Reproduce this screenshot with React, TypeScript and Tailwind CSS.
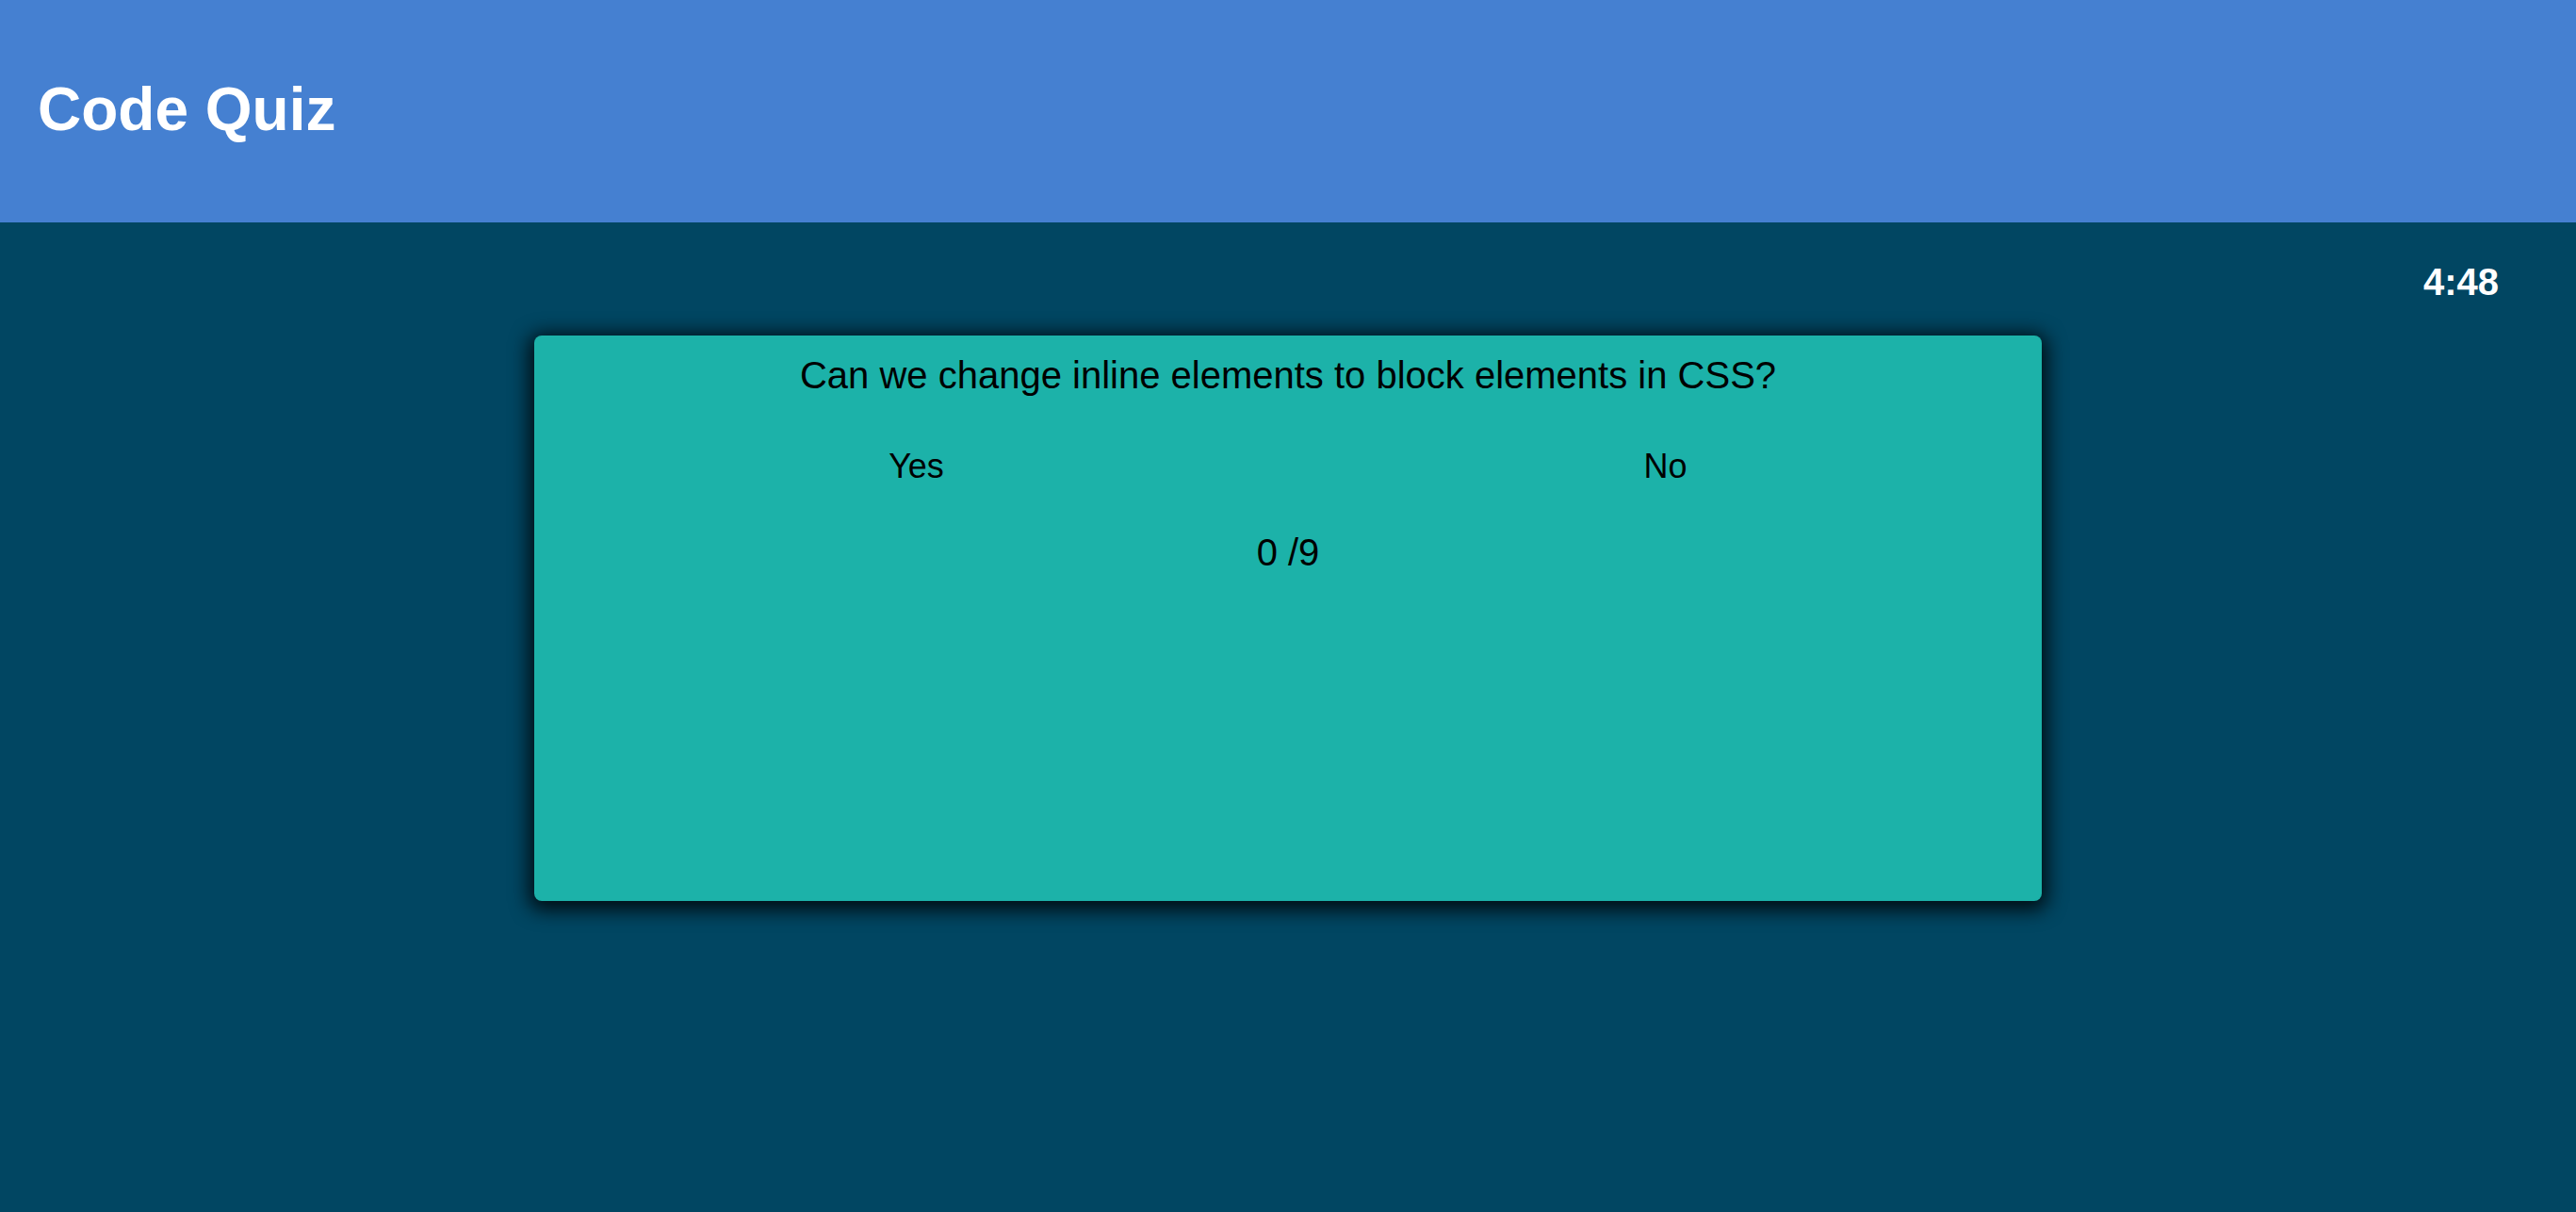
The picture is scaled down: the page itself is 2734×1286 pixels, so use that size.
const question = {
  text: "Can we change inline elements to block elements in CSS?",
  choices: ["Yes", "No"],
};

export default function App() {
  const score = 0;
  const total = 9;

  return (
    <div
      className="min-h-screen bg-[#014662]"
      style={{ fontFamily: '"Liberation Sans", Arial, sans-serif' }}
    >
      <header className="flex h-[236px] items-center bg-[#4580d1] px-[40px] pb-1">
        <h1 className="text-[64px] font-bold leading-none text-white">Code Quiz</h1>
      </header>

      <main className="pt-[43px]">
        <div className="flex justify-end pr-[82px]">
          <span className="text-[40px] font-bold leading-none text-white">4:48</span>
        </div>

        <section className="mx-auto mt-[37px] h-[600px] w-[1600px] rounded-[8px] bg-[#1cb2a9] pt-[22px] text-black shadow-[0_4px_20px_6px_rgba(0,0,0,0.8)]">
          <p className="text-center text-[40px] leading-none">{question.text}</p>

          <div className="mt-[59px] grid grid-cols-2 pl-[8px] pr-[2px]">
            {question.choices.map((c) => (
              <button key={c} className="text-center text-[36px] leading-none">
                {c}
              </button>
            ))}
          </div>

          <p className="mt-[53px] text-center text-[40px] leading-none">
            {score} /{total}
          </p>
        </section>
      </main>
    </div>
  );
}
